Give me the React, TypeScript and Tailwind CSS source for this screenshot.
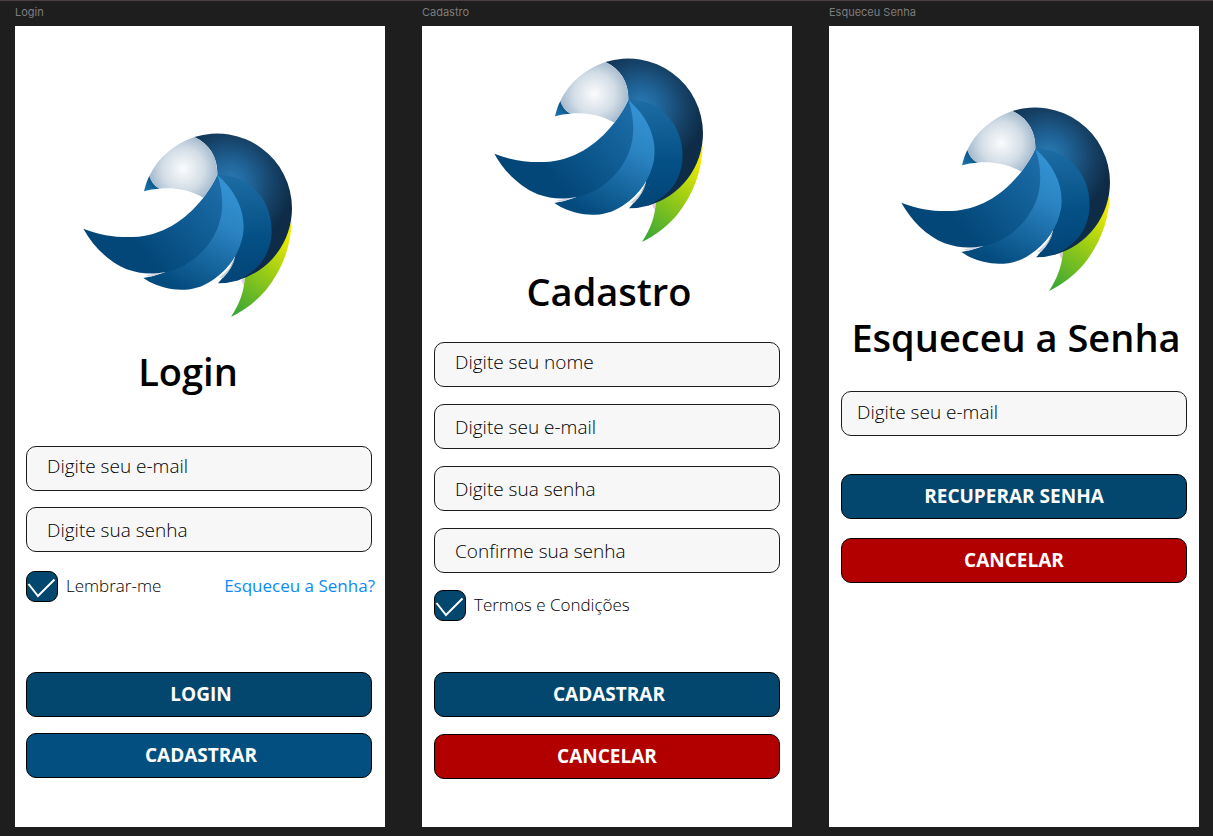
import { useId, type ReactNode } from "react";

function Logo() {
  const id = useId();
  const ref = (name: string) => `url(#${id}${name})`;
  return (
    <svg viewBox="0 0 720 630" className="h-[210px] w-[240px] shrink-0" role="img" aria-label="Logo">
      <defs>
        <radialGradient id={`${id}head`} gradientUnits="userSpaceOnUse" cx="340" cy="147" r="125">
          <stop offset="0" stopColor="#fbfcfd" />
          <stop offset="0.5" stopColor="#d3dde6" />
          <stop offset="1" stopColor="#89a6c0" />
        </radialGradient>
        <radialGradient id={`${id}back`} gradientUnits="userSpaceOnUse" cx="480" cy="185" r="190">
          <stop offset="0" stopColor="#2a7cb4" />
          <stop offset="0.3" stopColor="#20659a" />
          <stop offset="0.7" stopColor="#164166" />
          <stop offset="1" stopColor="#0e2c48" />
        </radialGradient>
        <linearGradient id={`${id}outer`} gradientUnits="userSpaceOnUse" x1="500" y1="165" x2="520" y2="480">
          <stop offset="0" stopColor="#1d6ca4" />
          <stop offset="0.6" stopColor="#045086" />
          <stop offset="1" stopColor="#034577" />
        </linearGradient>
        <linearGradient id={`${id}middle`} gradientUnits="userSpaceOnUse" x1="480" y1="210" x2="330" y2="510">
          <stop offset="0" stopColor="#3391d1" />
          <stop offset="0.3" stopColor="#2b84c2" />
          <stop offset="1" stopColor="#034a7d" />
        </linearGradient>
        <linearGradient id={`${id}wing`} gradientUnits="userSpaceOnUse" x1="450" y1="200" x2="220" y2="400">
          <stop offset="0" stopColor="#1d6ca8" />
          <stop offset="0.5" stopColor="#0e5a91" />
          <stop offset="1" stopColor="#034778" />
        </linearGradient>
        <linearGradient id={`${id}tail`} gradientUnits="userSpaceOnUse" x1="660" y1="340" x2="490" y2="585">
          <stop offset="0" stopColor="#f5ec00" />
          <stop offset="0.4" stopColor="#a5d012" />
          <stop offset="1" stopColor="#36a536" />
        </linearGradient>
        <linearGradient id={`${id}beak`} x1="0" y1="1" x2="1" y2="0">
          <stop offset="0" stopColor="#1e79b4" />
          <stop offset="1" stopColor="#033f6d" />
        </linearGradient>
      </defs>
      <path d="M665 300C664 375 638 448 588 510C558 545 522 572 483 591C509 552 523 512 524 472C580 450 640 390 665 300Z" fill={ref("tail")} />
      <path d="M522 474C524 485 523 491 520 495L514 480Z" fill="#e6c4e8" />
      <path d="M373 51A225 225 0 0 1 666 265A225 225 0 0 1 500 482L520 345L442 165C444 115 420 72 373 51Z" fill={ref("back")} />
      <path d="M442 165C505 163 552 195 580 240C606 282 612 342 596 385C584 425 550 460 500 482Q472 490 444 490C468 465 484 440 495 412L470 300Z" fill={ref("outer")} />
      <path d="M447 474C470 456 487 436 496 412C490 435 478 455 460 473Z" fill="#c5d2dc" />
      <path d="M442 165C500 215 529 280 519 345C508 402 475 450 425 482C387 508 346 512 310 508C272 502 245 491 220 474Q253 469 285 457L380 330Z" fill={ref("middle")} />
      <path d="M228 466L284 457L238 471Z" fill="#d8d3e2" />
      <path d="M442 165C465 230 461 300 430 350C398 407 340 447 284 457C240 464 208 461 170 448C115 425 70 380 40 326C90 346 140 353 190 351C275 347 345 303 400 233C418 208 432 187 442 165Z" fill={ref("wing")} />
      <path d="M373 51C420 75 445 115 441 165C430 193 415 213 400 233C355 207 305 202 268 206C251 195 243 182 238 168C263 114 312 72 373 51Z" fill={ref("head")} />
      <path d="M238 168C243 184 252 197 268 206Q244 207 222 214C226 197 231 182 238 168Z" fill={ref("beak")} />
    </svg>
  );
}

function Screen({ name, children }: { name: string; children: ReactNode }) {
  return (
    <section className="flex min-w-0 flex-col">
      <h2 className="h-[25px] pt-1 font-['Inter',sans-serif] text-[11px] leading-[14px] text-[#7d7d7d]">{name}</h2>
      <div className="flex flex-1 flex-col bg-white font-['Open_Sans',sans-serif] text-black">{children}</div>
    </section>
  );
}

const field =
  "h-[45px] w-full rounded-[10px] border border-[#1c1c1c] bg-[#f7f7f7] text-[19px] font-light text-black outline-none placeholder:text-black placeholder:opacity-100";
const fieldInset = "px-5";
const button = "h-[45px] w-full rounded-[10px] border border-black text-[19px] font-bold text-white";
const title = "text-center text-[38px] leading-[48px] font-semibold";

function Check({ label }: { label: string }) {
  return (
    <label className="flex items-center gap-2 text-[17px] leading-6 font-light">
      <span className="relative block h-[31px] w-8">
        <input
          type="checkbox"
          defaultChecked
          className="peer block h-[31px] w-8 appearance-none rounded-[9px] border border-black bg-white checked:bg-[#03476f]"
        />
        <svg
          viewBox="0 0 32 31"
          className="pointer-events-none absolute inset-0 hidden h-[31px] w-8 peer-checked:block"
          fill="none"
          stroke="white"
          strokeWidth="2"
          aria-hidden="true"
        >
          <path d="M2.5 13L12 25L28.5 8.5" />
        </svg>
      </span>
      <span className="pb-[2px]">{label}</span>
    </label>
  );
}

export default function App() {
  return (
    <main className="grid min-h-screen grid-cols-3 gap-[37px] border-t border-[#4d3f44] bg-[#1e1e1e] pr-[14px] pb-[9px] pl-[15px]">
      <Screen name="Login">
        <div className="flex justify-center pt-[94px] pr-5">
          <Logo />
        </div>
        <h1 className={`${title} mt-[17px] pr-6`}>Login</h1>
        <form className="mt-[51px] flex flex-col pr-[13px] pl-[11px]" onSubmit={(e) => e.preventDefault()}>
          <div className="flex flex-col gap-4">
            <input type="email" aria-label="E-mail" placeholder="Digite seu e-mail" className={`${field} ${fieldInset} pb-[6px]`} />
            <input type="password" aria-label="Senha" placeholder="Digite sua senha" className={`${field} ${fieldInset}`} />
          </div>
          <div className="mt-[19px] -mr-[3px] flex items-center justify-between">
            <Check label="Lembrar-me" />
            <a href="#esqueceu" className="pb-[2px] text-[17px] leading-6 text-[#0a8cf5]">Esqueceu a Senha?</a>
          </div>
          <div className="mt-[70px] flex flex-col gap-4">
            <button type="submit" className={`${button} bg-[#03476f] pl-1`}>LOGIN</button>
            <button type="button" className={`${button} bg-[#024f80] pl-1`}>CADASTRAR</button>
          </div>
        </form>
      </Screen>

      <Screen name="Cadastro">
        <div className="flex justify-center pt-[19px] pr-3">
          <Logo />
        </div>
        <h1 className={`${title} mt-3 pl-1`}>Cadastro</h1>
        <form className="mt-[27px] flex flex-col px-3" onSubmit={(e) => e.preventDefault()}>
          <div className="flex flex-col gap-[17px]">
            <input type="text" aria-label="Nome" placeholder="Digite seu nome" className={`${field} ${fieldInset} pb-[6px]`} />
            <input type="email" aria-label="E-mail" placeholder="Digite seu e-mail" className={`${field} ${fieldInset}`} />
            <input type="password" aria-label="Senha" placeholder="Digite sua senha" className={`${field} ${fieldInset}`} />
            <input type="password" aria-label="Confirmar senha" placeholder="Confirme sua senha" className={`${field} ${fieldInset}`} />
            <Check label="Termos e Condições" />
          </div>
          <div className="mt-[51px] flex flex-col gap-[17px]">
            <button type="submit" className={`${button} bg-[#03476f] pl-1`}>CADASTRAR</button>
            <button type="button" className={`${button} bg-[#b20000]`}>CANCELAR</button>
          </div>
        </form>
      </Screen>

      <Screen name="Esqueceu Senha">
        <div className="flex justify-center pt-[68px] pr-3">
          <Logo />
        </div>
        <h1 className={`${title} mt-[9px] pl-1 whitespace-nowrap`}>Esqueceu a Senha</h1>
        <form className="mt-[30px] flex flex-col px-3" onSubmit={(e) => e.preventDefault()}>
          <input type="email" aria-label="E-mail" placeholder="Digite seu e-mail" className={`${field} pr-5 pb-1 pl-[15px]`} />
          <div className="mt-[38px] flex flex-col gap-[19px]">
            <button type="submit" className={`${button} bg-[#03476f]`}>RECUPERAR SENHA</button>
            <button type="button" className={`${button} bg-[#b20000]`}>CANCELAR</button>
          </div>
        </form>
      </Screen>
    </main>
  );
}
